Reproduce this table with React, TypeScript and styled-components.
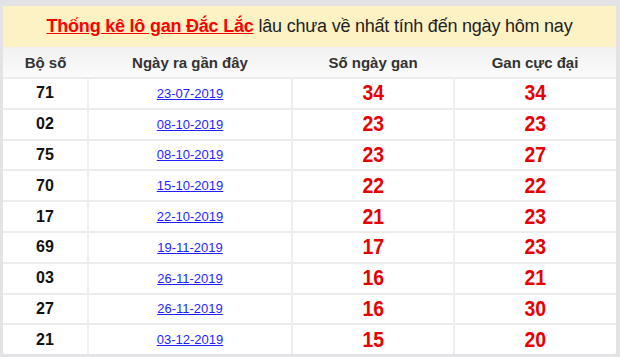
import React from "react";
import styled, {createGlobalStyle} from "styled-components";

const GlobalStyle = createGlobalStyle`
    html, body {
        margin: 0;
        padding: 0;
        background: #e3e3e5;
    }
    body {
        font-family: "Liberation Sans", Arial, sans-serif;
    }
`;

const Page = styled.div`
    padding: 6px 4px 3px 3px;
`;

const Box = styled.div`
    background: #fff;
    border-radius: 2px;
    overflow: hidden;
`;

const Title = styled.div`
    height: 41px;
    background: #fdf2c3;
    display: flex;
    align-items: center;
    justify-content: center;
    font-size: 18px;
    letter-spacing: -0.22px;
    color: #222;
    white-space: nowrap;
`;

const TitleLink = styled.a`
    color: #f00;
    font-weight: bold;
    text-decoration: underline;
    margin-right: 5px;
`;

const Table = styled.table`
    width: 100%;
    border-collapse: collapse;
    table-layout: fixed;
`;

const Head = styled.th`
    height: 30px;
    padding: 0;
    font-size: 15px;
    font-weight: bold;
    color: #333;
    background: linear-gradient(#f1f1f1, #fbfbfb);
    text-align: center;
`;

const Row = styled.tr`
    border-top: 2px solid #ececec;
`;

const Cell = styled.td`
    height: 28.8px;
    padding: 0;
    line-height: 20px;
    text-align: center;
    border-left: 2px solid #efefef;
    &:first-child {
        border-left: none;
    }
`;

const Num = styled.span`
    font-size: 16px;
    font-weight: bold;
    color: #111;
`;

const DateLink = styled.a`
    font-size: 13px;
    color: #1f1fff;
    text-decoration: underline;
`;

const Big = styled.span`
    display: inline-block;
    font-size: 22px;
    line-height: 24px;
    font-weight: bold;
    color: #e60000;
    transform: scaleX(0.88);
`;

const rows = [
    ["71", "23-07-2019", 34, 34],
    ["02", "08-10-2019", 23, 23],
    ["75", "08-10-2019", 23, 27],
    ["70", "15-10-2019", 22, 22],
    ["17", "22-10-2019", 21, 23],
    ["69", "19-11-2019", 17, 23],
    ["03", "26-11-2019", 16, 21],
    ["27", "26-11-2019", 16, 30],
    ["21", "03-12-2019", 15, 20],
];

const App = () => {
    return (
        <Page>
            <GlobalStyle/>
            <Box>
                <Title>
                    <TitleLink href="#">Thống kê lô gan Đắc Lắc</TitleLink>
                    lâu chưa về nhất tính đến ngày hôm nay
                </Title>
                <Table>
                    <colgroup>
                        <col style={{width: 85}}/>
                        <col style={{width: 204}}/>
                        <col style={{width: 162}}/>
                        <col/>
                    </colgroup>
                    <thead>
                        <tr>
                            <Head>Bộ số</Head>
                            <Head>Ngày ra gần đây</Head>
                            <Head>Số ngày gan</Head>
                            <Head>Gan cực đại</Head>
                        </tr>
                    </thead>
                    <tbody>
                        {rows.map(r => (
                            <Row key={r[0] as string}>
                                <Cell><Num>{r[0]}</Num></Cell>
                                <Cell><DateLink href="#">{r[1]}</DateLink></Cell>
                                <Cell><Big>{r[2]}</Big></Cell>
                                <Cell><Big>{r[3]}</Big></Cell>
                            </Row>
                        ))}
                    </tbody>
                </Table>
            </Box>
        </Page>
    )
}
export default App;
